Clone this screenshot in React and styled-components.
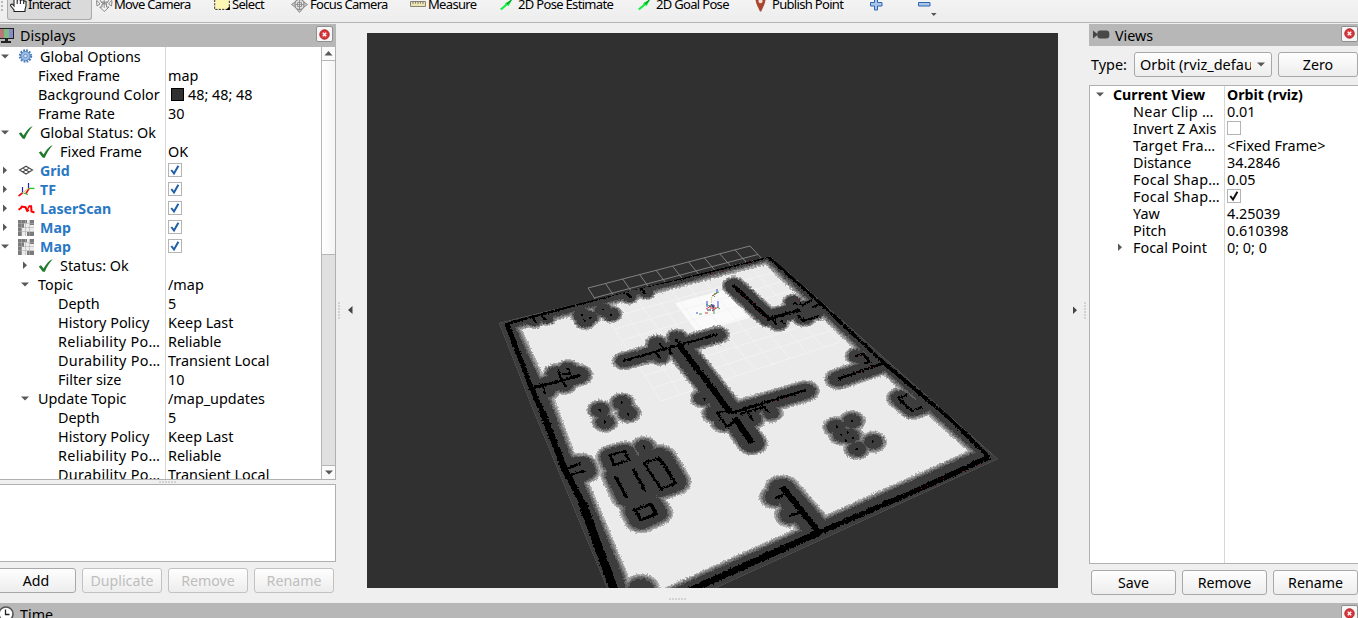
import React from 'react';
import styled, { createGlobalStyle, css } from 'styled-components';

const Global = createGlobalStyle`
  * { box-sizing: border-box; }
  body { margin: 0; background: #efefef; overflow: hidden; }
  svg { display: block; flex: none; }
`;

const Window = styled.div`
  width: 1358px;
  height: 618px;
  overflow: hidden;
  display: flex;
  flex-direction: column;
  background: #efefef;
  color: #000;
  font: 14.5px/19px 'Noto Sans', 'Open Sans', sans-serif;
  white-space: nowrap;
`;

/* ---------- toolbar ---------- */
const Toolbar = styled.div`
  height: 23px;
  flex: none;
  display: flex;
  align-items: flex-start;
  overflow: hidden;
  border-bottom: 1px solid #b4b4b4;
  background: linear-gradient(#f3f3f3, #ededed);
  font-size: 13px;
`;
const Grip = styled.div`
  width: 7px;
  height: 13px;
  flex: none;
  background: radial-gradient(circle at 2px 2px, #b9b9b9 1px, transparent 1.2px) 0 0 / 4px 4px repeat-y;
`;
const ToolButton = styled.div`
  width: ${p => p.$w}px;
  height: 20px;
  flex: none;
  display: flex;
  align-items: flex-start;
  padding-left: ${p => p.$pad || 0}px;
  ${p => p.$active && css`
    background: #dadada;
    border: 1px solid #aaa;
    border-top: 0;
    border-radius: 0 0 3px 3px;
  `}
`;
const ToolIcon = styled.div`
  width: ${p => p.$w || 18}px;
  height: 20px;
  flex: none;
`;
const ToolLabel = styled.span`
  margin-top: -5px;
  letter-spacing: -0.68px;
`;

/* ---------- shared panel parts ---------- */
const Body = styled.div`
  display: flex;
  height: 580px;
  flex: none;
`;
const Side = styled.div`
  width: ${p => p.$w}px;
  flex: none;
  display: flex;
  flex-direction: column;
  padding-top: 1px;
`;
const PanelHeader = styled.div`
  height: ${p => p.$h || 22}px;
  flex: none;
  display: flex;
  align-items: center;
  background: #b7b7b7;
  padding-right: ${p => p.$right || 0}px;
  font-size: 14.3px;
`;
const HeaderIcon = styled.div`
  width: ${p => p.$w}px;
  flex: none;
`;
const HeaderTitle = styled.div`
  flex: 1;
`;
const CloseBox = styled.div`
  width: 17px;
  height: 16px;
  margin-top: ${p => (p.$flush ? 0 : -3)}px;
  border: 1px solid #909090;
  border-radius: 2px;
  background: #f6f6f6;
  display: flex;
  align-items: center;
  justify-content: center;
`;
const Button = styled.div`
  width: ${p => p.$w}px;
  height: 25px;
  flex: none;
  border: 1px solid ${p => (p.$off ? '#c2c2c2' : '#a8a8a8')};
  border-radius: 3px;
  background: linear-gradient(#fefefe, #ededed);
  color: ${p => (p.$off ? '#bebebe' : '#000')};
  display: flex;
  align-items: center;
  justify-content: center;
  font-size: 14.2px;
`;
const ButtonRow = styled.div`
  display: flex;
  gap: 6px;
  margin-top: ${p => p.$top}px;
  margin-left: ${p => p.$left}px;
`;

/* ---------- property trees ---------- */
const TreeBox = styled.div`
  display: flex;
  height: ${p => p.$h}px;
  flex: none;
  overflow: hidden;
  background: #fff;
  border: solid #b0b0b0;
  border-width: ${p => p.$border};
`;
const Rows = styled.div`
  flex: 1;
  min-width: 0;
  background: linear-gradient(#d6d6d6, #d6d6d6) ${p => p.$split}px 0 / 1px 100% no-repeat;
`;
const Row = styled.div`
  display: flex;
  align-items: center;
  height: ${p => p.$h}px;
  line-height: ${p => p.$h}px;
  font-weight: ${p => (p.$bold ? 700 : 400)};
  font-size: ${p => (p.$bold ? 14.2 : 14.4)}px;
`;
const NameCell = styled.div`
  width: ${p => p.$w}px;
  flex: none;
  display: flex;
  align-items: center;
  padding-left: ${p => p.$indent}px;
  color: ${p => (p.$blue ? '#2a78c4' : 'inherit')};
`;
const ArrowSlot = styled.div`
  width: ${p => p.$w}px;
  flex: none;
`;
const IconSlot = styled.div`
  width: 22px;
  height: 18px;
  flex: none;
  display: flex;
  align-items: center;
`;
const NameText = styled.span`
  letter-spacing: ${p => (p.$elided ? 0.3 : 0)}px;
`;
const ValueCell = styled.div`
  display: flex;
  align-items: center;
  padding-left: 3px;
`;
const Swatch = styled.div`
  width: 13px;
  height: 13px;
  margin: 0 4px 0 3px;
  border: 1px solid #000;
  background: #303030;
`;
const CheckBox = styled.div`
  width: 14px;
  height: 14px;
  margin-top: -2px;
  border: 1px solid #b4b4b4;
  background: #fff;
  display: flex;
  align-items: center;
  justify-content: center;
`;
const ScrollBar = styled.div`
  width: 14px;
  flex: none;
  border-left: 1px solid #b6b6b6;
  display: flex;
  flex-direction: column;
  background: #e0e0e0;
`;
const ScrollEnd = styled.div`
  height: 14px;
  flex: none;
  background: #fbfbfb;
  border: solid #b6b6b6;
  border-width: ${p => (p.$bottom ? '1px 0 0' : '0 0 1px')};
  display: flex;
  align-items: center;
  justify-content: center;
`;
const ScrollThumb = styled.div`
  height: 194px;
  background: linear-gradient(90deg, #fff, #f4f4f4);
  border-bottom: 1px solid #b6b6b6;
`;
const ScrollTrack = styled.div`
  flex: 1;
`;
const Dots = styled.div`
  width: ${p => (p.$v ? 3 : 18)}px;
  height: ${p => (p.$v ? 18 : 3)}px;
  background: radial-gradient(circle at 1px 1px, #c4c4c4 0.6px, transparent 0.9px) 0 0 / 3px 3px;
`;
const SplitRow = styled.div`
  height: 4px;
  flex: none;
  display: flex;
  align-items: center;
  justify-content: center;
`;
const HelpBox = styled.div`
  height: 78px;
  flex: none;
  background: #fff;
  border: solid #b0b0b0;
  border-width: 1px 1px 1px 0;
`;
const Gutter = styled.div`
  width: ${p => p.$w}px;
  flex: none;
  display: flex;
  align-items: center;
  justify-content: ${p => (p.$right ? 'flex-end' : 'flex-start')};
  gap: 5px;
  padding: 0 ${p => (p.$right ? 2 : 0)}px 5px ${p => (p.$right ? 0 : 2)}px;
`;
const Center = styled.div`
  width: 691px;
  flex: none;
  padding-top: 10px;
  display: flex;
  flex-direction: column;
`;
const Viewport = styled.div`
  height: 555px;
  background: #303030;
  overflow: hidden;
`;
const CenterFoot = styled.div`
  flex: 1;
  padding: 10px 0 0 302px;
`;
const TypeRow = styled.div`
  display: flex;
  align-items: center;
  height: 39px;
  flex: none;
  padding: 0 0 2px 2px;
`;
const TypeLabel = styled.div`
  width: 43px;
  font-size: 14.4px;
`;
const Select = styled.div`
  width: 138px;
  height: 25px;
  border: 1px solid #a8a8a8;
  border-radius: 3px;
  background: linear-gradient(#fefefe, #ededed);
  display: flex;
  align-items: center;
  justify-content: space-between;
  padding: 0 6px 0 5px;
  margin-right: 6px;
`;
const SelectText = styled.div`
  width: 111px;
  overflow: hidden;
`;
const TimeBar = styled(PanelHeader)`
  height: 22px;
  align-items: flex-start;
  padding-top: 2px;
`;

/* ---------- icons ---------- */
const Tri = ({ dir, c = '#585858' }) => {
  const d = { down: 'M1 2.5H9L5 6.5Z', right: 'M3 0.5V8L7 4.2Z', left: 'M6.5 0V8L2 4Z', up: 'M0.5 6.5H8.5L4.5 2Z' }[dir];
  return <svg width="9" height="9"><path d={d} fill={c} /></svg>;
};
const Tick = () => (
  <svg width="16" height="16" viewBox="0 0 16 16">
    <path d="M0.8 8.6 3 7.2 5.6 10.6C8 6 10.8 2.6 14.8 1 11.4 4.8 8.8 9 6.8 13.8H4.8Z" fill="#1f7a2a" />
  </svg>
);
const Check = ({ c }) => (
  <svg width="12" height="12" viewBox="0 0 12 12">
    <path d="M2.3 6 5 9.5 9.4 1.8" fill="none" stroke={c} strokeWidth="2" />
  </svg>
);
const Gear = () => (
  <svg width="15" height="15" viewBox="0 0 15 15">
    <circle cx="7.5" cy="7" r="5.6" fill="none" stroke="#4679b8" strokeWidth="2.2" strokeDasharray="1.7 1.23" />
    <circle cx="7.5" cy="7" r="4.6" fill="#9dbfe6" stroke="#4c80bd" />
    <circle cx="7.5" cy="7" r="1.8" fill="#dce9f7" stroke="#4c80bd" strokeWidth=".8" />
  </svg>
);
const GridIcon = () => (
  <svg width="16" height="12" viewBox="0 0 16 12">
    <path d="M1.5 5 8 1.2 14.5 5 8 9Z M4.7 3.1 11.3 7 M11.3 3.1 4.7 7" fill="none" stroke="#4a4a4a" strokeWidth="1.1" />
  </svg>
);
const TfIcon = () => (
  <svg width="17" height="16" viewBox="0 0 17 16" fill="none" strokeWidth="1.2">
    <path d="M4.5 5V10.5M10.5 1V6" stroke="#22c" />
    <path d="M5.5 11 10 12.5M11 6.3H16.5" stroke="#1c2" />
    <path d="M4.5 11 0.5 14M11 6.5 8 11.5" stroke="#e11" strokeWidth="1.6" />
    <path d="M5 10.5 10.5 6.5" stroke="#e0c020" strokeWidth=".9" />
  </svg>
);
const LaserIcon = () => (
  <svg width="17" height="12" viewBox="0 0 17 12">
    <path d="M0.5 6.8 3 5 3.8 3.6 7.5 4.2 9.2 8 11 7.2M10.8 3.2H14M13.2 3.5 13.5 8.5 16.5 9.5" fill="none" stroke="#f00" strokeWidth="2" />
    <path d="M9 7.5 11.2 3" stroke="#f00" strokeWidth="1.4" />
  </svg>
);
const MapIcon = () => (
  <svg width="16" height="16" viewBox="0 0 16 16">
    <path d="M0 0H16V16H0Z" fill="#ececec" />
    <path d="M0 0H9V3H6V8H4V16H0Z M12 0H16V5H12Z M9 12H16V16H9Z" fill="#7b7b7b" />
    <path d="M3.5 0V16M7.5 0V16M11.5 0V16M0 3.5H16M0 7.5H16M0 11.5H16" stroke="#b0b0b0" strokeWidth=".6" />
  </svg>
);
const Monitor = () => (
  <svg width="15" height="17" viewBox="0 0 15 17">
    <path d="M-2 1H14V12H-2Z" fill="#222" />
    <path d="M-1 2H4V11H-1Z" fill="#b87878" /><path d="M4 2H9V11H4Z" fill="#7dbb86" /><path d="M9 2H13V11H9Z" fill="#8a88c8" />
    <path d="M5 12H8V14H11V16H1V14H5Z" fill="#222" />
  </svg>
);
const CloseIcon = () => (
  <svg width="11" height="11" viewBox="0 0 11 11">
    <circle cx="5.5" cy="5.5" r="4.7" fill="#d8383c" stroke="#b01c22" />
    <path d="M3.8 3.8 7.2 7.2M7.2 3.8 3.8 7.2" stroke="#fff" strokeWidth="1.4" />
  </svg>
);
const CameraIcon = () => (
  <svg width="22" height="10" viewBox="-4 0 22 10">
    <path d="M0 0.5 5 4.5 0 8.5Z" fill="#444" /><rect x="4.3" y="0.5" width="12" height="8" rx="3" fill="#484848" />
  </svg>
);
const Clock = () => (
  <svg width="16" height="17" viewBox="0 0 16 17">
    <circle cx="6" cy="9" r="7" fill="#fff" stroke="#555" strokeWidth="1.6" />
    <path d="M5.5 4.5V9.5H9.5" fill="none" stroke="#222" strokeWidth="1.3" />
  </svg>
);
const Hand = () => (
  <svg width="17" height="13" viewBox="0 0 17 13">
    <path d="M4 0V6L2.5 4.2C1 3.8 0 5 .8 6L4 10V11.5H15V9.5L16 6V1.5C15 .5 14 1 13.7 2.2V0.5C12.5-.6 11-.3 10.4 1V0C9-.8 7.8-.6 7.2.6V0M7.2 0V4M10.4 0V4M13.7 1V4" fill="#fff" stroke="#222" strokeWidth="1.1" />
  </svg>
);
const MoveIcon = () => (
  <svg width="17" height="12" viewBox="0 0 17 12" fill="#f4f4f4" stroke="#7c7c7c" strokeWidth=".9">
    <path d="M.5 0 4 4 1 6 .5 1M16 0 12.5 4 15.5 6 16 1M4 0 6 3 11 3 13 0M6 4H10.5V7H13L8.2 11.5 3.7 7H6Z" />
    <path d="M8.2 0V8M5 2H12" strokeWidth=".8" />
  </svg>
);
const SelectIcon = () => (
  <svg width="17" height="11"><path d="M.7 -5H15.3V9.4H.7Z" fill="#fdf6b4" stroke="#333" strokeDasharray="2.2 1.2" /><path d="M15.8 6V10H12Z" /></svg>
);
const FocusIcon = () => (
  <svg width="17" height="13" viewBox="0 0 17 13" fill="none" stroke="#8c8c8c">
    <circle cx="8.5" cy="4.5" r="5" fill="#e2e2e2" strokeWidth="1.1" />
    <path d="M.5 4.5 4 2V7ZM16.5 4.5 13 2V7ZM8.5 12.5 6 9.5H11Z" fill="#ccc" />
    <path d="M8.5 0V9M4 4.5H13M6.5 2.5H10.5V6.5H6.5Z" strokeWidth=".9" />
  </svg>
);
const Ruler = () => (
  <svg width="17" height="8"><path d="M.5 1.5H15.5V6.5H.5Z" fill="#eee6b0" stroke="#888470" /><path d="M3 1V4M5.5 1V3.5M8 1V4M10.5 1V3.5M13 1V4" stroke="#777" /></svg>
);
const GreenArrow = () => (
  <svg width="15" height="11"><path d="M.8 9.6 7 4.2" stroke="#0cf03c" strokeWidth="2" /><path d="M5 3.2 12.5-1 8.6 6Z" fill="#0be238" /><path d="M7 4 11.5 0" stroke="#067a20" strokeWidth="1" /></svg>
);
const Pin = () => (
  <svg width="13" height="12" viewBox="0 0 13 12"><path d="M1.5-1H11.5C11.5 3 9.5 6 7.2 11.5H6C3.5 6 1.5 3 1.5-1Z" fill="#a8472e" /><circle cx="6.5" cy="1.2" r="2" fill="#f3ded8" /></svg>
);
const Plus = () => (
  <svg width="13" height="11"><path d="M4.5-2H7.5V2.5H12V6H7.5V10H4.5V6H.5V2.5H4.5Z" fill="#a9c6ea" stroke="#2f66b0" /></svg>
);
const Minus = () => (
  <svg width="13" height="8"><path d="M.5 2.5H12V6H.5Z" fill="#a9c6ea" stroke="#2f66b0" /></svg>
);

/* ---------- 3D scene ---------- */
const SQUASH = 0.78;
const pathOf = (pts, closed) =>
  'M' + pts.map(([x, y]) => `${x} ${(y / SQUASH).toFixed(2)}`).join('L') + (closed ? 'Z' : '');
const dot = (x, y) => [[x, y], [x + 0.1, y]];

// inflated areas: [halo width, points, closed]
const HALOS = [
  [20, [[541, 387], [579, 375]]], [19, dot(568, 370)], [19, dot(556, 374)], [19, dot(564, 384)], [17, dot(547, 391)],
  [15, dot(534, 320)], [13, dot(547, 318)], [15, dot(629, 296)], [14, dot(646, 292)],
  [17, dot(582, 315)], [16, dot(585, 321)], [15, dot(590, 317)], [16, dot(603, 310)], [16, dot(611, 314)],
  [16, [[624, 361], [718, 335]]], [17, dot(657, 344)], [17, dot(677, 338)], [17, dot(660, 356)],
  [24, [[680, 348], [731, 413], [752, 443]]], [18, dot(703, 398)], [21, dot(716, 413)], [20, dot(724, 422)],
  [19, [[731, 413], [806, 391]]], [16, dot(771, 413)], [19, dot(752, 419)],
  [18, [[734, 286], [768, 318], [821, 304]]], [15, dot(793, 302)], [21, dot(804, 316)], [17, dot(815, 312)], [16, dot(778, 323)],
  [19, [[838, 379], [880, 365]]], [17, dot(857, 356)], [17, dot(867, 360)],
  [19, [[900, 398], [913, 409], [921, 406]]],
  [18, dot(600, 410)], [18, dot(622, 403)], [18, dot(628, 413)], [18, dot(605, 422)],
  [18, dot(852, 421)], [18, dot(836, 427)], [18, dot(842, 435)], [18, dot(850, 436)], [18, dot(857, 449)], [18, dot(873, 442)],
  [21, [[611, 457], [625, 453], [627, 460], [614, 464]], true], [18, dot(644, 447)],
  [21, [[616, 475], [640, 467], [648, 489], [627, 498]], true],
  [25, [[645, 463], [660, 458], [674, 482], [660, 487]], true],
  [23, [[636, 510], [650, 504], [656, 513], [641, 520]], true],
  [23, [[566, 466], [582, 466], [584, 471], [572, 476]], true],
  [26, [[782, 489], [820, 533]]], [21, dot(775, 497)], [21, dot(790, 515)], [24, dot(641, 588)],
];

// occupied cells: [line width, points, closed]
const WALLS = [
  [3, [[506, 324], [543, 314], [630, 290], [700, 274], [769, 257]]],
  [3.6, [[769, 257], [821, 304], [884, 363]]], [4.3, [[884, 363], [948, 417], [989, 457]]],
  [5, [[507, 324], [531, 387], [542, 411]]], [6.5, [[542, 411], [565, 470], [582, 502]]], [8.5, [[582, 502], [597, 543], [615, 592]]],
  [6.4, [[989, 457], [920, 489], [818, 533]]], [8, [[818, 533], [740, 568], [680, 595]]],
  [3.5, [[532, 388], [556, 382], [580, 375]]], [2.5, [[558, 370], [561, 379], [566, 387]]], [2.5, [[562, 374], [570, 374], [568, 368]]], [2, [[543, 386], [545, 394]]],
  [2, [[533, 316], [536, 323]]], [2, [[541, 315], [546, 320]]], [3, [[627, 293], [631, 298]]], [3, [[642, 289], [645, 294]]],
  [2.8, [[623, 361], [718, 334]]], [2, [[659, 343], [664, 349]]], [2, [[656, 352], [660, 359]]], [2, [[669, 348], [671, 354]]], [3, [[676, 339], [682, 347]]],
  [6, [[679, 345], [731, 413]]], [6.5, [[735, 418], [752, 443]]],
  [3.3, [[731, 413], [806, 390]]], [2.6, [[717, 413], [727, 427], [735, 421]]], [2.5, [[717, 413], [730, 410]]], [2.6, [[740, 414], [764, 407], [769, 413]]], [2.5, [[748, 413], [753, 421]]],
  [4.2, [[733, 285], [769, 319]]], [4, [[768, 319], [800, 310]]], [2.6, [[793, 303], [803, 305], [812, 300]]], [2.8, [[798, 315], [803, 321], [819, 316]]], [3, [[812, 307], [822, 304]]], [2, [[772, 318], [776, 325]]], [2, [[781, 321], [785, 324]]],
  [3.3, [[838, 379], [884, 363]]], [2.6, [[855, 356], [863, 354], [870, 362], [864, 363]]],
  [2.8, [[907, 395], [898, 398], [912, 411], [922, 407]]],
  [2.6, [[610, 455], [625, 451], [629, 460], [614, 465]], true],
  [3.2, [[615, 476], [627, 498]]], [3.2, [[633, 469], [645, 491]]],
  [2.6, [[644, 463], [660, 458], [676, 483], [661, 489]], true], [3.6, [[659, 458], [675, 482]]],
  [3.5, [[635, 510], [651, 504], [656, 514], [641, 520]], true],
  [3, [[567, 469], [581, 463]]], [3, [[570, 475], [585, 471]]],
  [6.5, [[782, 487], [820, 533]]], [2.8, [[783, 495], [775, 498]]], [2.8, [[789, 516], [799, 513]]],
];
const POINTS = [
  [582, 315], [585, 321], [590, 318], [603, 310], [611, 315], [600, 410], [622, 403], [628, 414], [605, 422], [644, 447],
  [852, 421], [837, 427], [841, 435], [848, 433], [853, 438], [846, 441], [857, 449], [873, 442], [704, 399],
];
const OUTER = [[499, 323], [770, 256], [998, 459], [740, 577], [624, 630], [607, 588], [567, 492], [533, 410]];
const INNER = [[515, 327], [767, 260], [862, 350], [976, 452], [823, 521], [750, 554], [655, 597], [628, 597], [622, 574], [604, 531], [587, 491], [569, 453], [550, 402]];
const LEVELS = [['#b2b2b2', 10], ['#979797', 7.8], ['#7b7b7b', 5.6], ['#5e5e5e', 3.2], ['#3c3c3c', 0]];
// rings around an obstacle get wider toward the viewer
const near = y => 0.7 + Math.max(0, y - 300) / 480;

// perspective projection of the unit square onto the ground grid quad
const QUAD = [[588, 288], [750, 246], [840, 342], [661, 401]];
const project = (u, v) => {
  const [[x0, y0], [x1, y1], [x2, y2], [x3, y3]] = QUAD;
  const dx1 = x1 - x2, dx2 = x3 - x2, dx3 = x0 - x1 + x2 - x3;
  const dy1 = y1 - y2, dy2 = y3 - y2, dy3 = y0 - y1 + y2 - y3;
  const den = dx1 * dy2 - dx2 * dy1;
  const g = (dx3 * dy2 - dx2 * dy3) / den;
  const h = (dx1 * dy3 - dx3 * dy1) / den;
  const w = g * u + h * v + 1;
  return [((x1 - x0 + g * x1) * u + (x3 - x0 + h * x3) * v + x0) / w, ((y1 - y0 + g * y1) * u + (y3 - y0 + h * y3) * v + y0) / w];
};
const gridPath = Array.from({ length: 11 }, (_, i) => {
  const t = i / 10;
  return `M${project(t, 0)}L${project(t, 1)}M${project(0, t)}L${project(1, t)}`;
}).join('');
const plain = pts => 'M' + pts.map(p => p.join(' ')).join('L') + 'Z';

const REDS = [[712, 273], [722, 271], [668, 280], [740, 291], [745, 296], [752, 303], [757, 308], [760, 312], [765, 317], [799, 300], [870, 367], [861, 371], [858, 355], [921, 488], [927, 485], [943, 478], [962, 471], [965, 470], [978, 464], [935, 485], [785, 397], [775, 400], [751, 261]];
const AXES = [
  ['#2a36d8', 'M707 301V307M717 289V293M718 301V308M697 312V314M713 304V311'],
  ['#d3222e', 'M706 309 711 306M712 311 718 307M712 296 717 293M710 308H716M705 313H708'],
  ['#2e9a3c', 'M706 304 709 306M714 294 719 292M714 309V314M717 307 720 309M699 314H702M713 295 715 297'],
  ['#202040', 'M709 306H715M711 304 714 308M707 310H711'],
];

const Scene = () => (
  <svg width="691" height="555" viewBox="367 33 691 555">
    <defs>
      <clipPath id="mapArea"><path d={plain(OUTER)} /></clipPath>
      <filter id="cells" x="480" y="240" width="540" height="400" filterUnits="userSpaceOnUse">
        <feTurbulence type="fractalNoise" baseFrequency="0.6" numOctaves="1" seed="4" result="n" />
        <feDisplacementMap in="SourceGraphic" in2="n" scale="3.6" xChannelSelector="R" yChannelSelector="G" />
      </filter>
    </defs>
    <path d={gridPath} fill="none" stroke="#8a8a8c" strokeWidth=".9" />
    <g clipPath="url(#mapArea)">
      <path d={plain(OUTER)} fill="#ebebeb" />
      <path d="M675 303 724 290 749 318 697 332Z" fill="#fafafa" />
      <path d={gridPath} fill="none" stroke="#f3f3f3" strokeWidth=".9" />
      <g filter="url(#cells)">
        <g transform={`scale(1 ${SQUASH})`} strokeLinecap="round" strokeLinejoin="round">
          {LEVELS.map(([c, extra]) => (
            <g key={c} stroke={c} fill="none" shapeRendering="crispEdges">
              <path d={pathOf([[470, 200], [1040, 200], [1040, 660], [470, 660]], true) + pathOf(INNER, true)} fill={c} fillRule="evenodd" strokeWidth={extra * 1.1 + 0.2} />
              {HALOS.map(([w, pts, closed], i) => (
                <path key={i} d={pathOf(pts, closed)} fill={closed ? c : 'none'} strokeWidth={w + extra * near(pts[0][1])} />
              ))}
            </g>
          ))}
          <g stroke="#040404" fill="none" shapeRendering="crispEdges" strokeLinecap="butt">
            {WALLS.map(([w, pts, closed], i) => <path key={i} d={pathOf(pts, closed)} strokeWidth={w} />)}
            {POINTS.map(([x, y], i) => <rect key={i} x={x - 1} y={y / SQUASH - 1} width="2.2" height="2.4" fill="#040404" stroke="none" />)}
          </g>
        </g>
      </g>
      {REDS.map(([x, y], i) => <rect key={i} x={x} y={y} width="1" height="1" fill="#8c0808" />)}
    </g>
    <g fill="none" strokeWidth="1" opacity=".9">
      {AXES.map(([c, d]) => <path key={c} d={d} stroke={c} />)}
      <path d="M711.5 297V303" stroke="#d8d4a8" strokeWidth="1" />
    </g>
  </svg>
);

/* ---------- data ---------- */
const ROWS = [
  { a: 'down', icon: <Gear />, n: 'Global Options' },
  { x: 38, n: 'Fixed Frame', v: 'map' },
  { x: 38, n: 'Background Color', v: '48; 48; 48', sw: true },
  { x: 38, n: 'Frame Rate', v: '30' },
  { a: 'down', icon: <Tick />, n: 'Global Status: Ok' },
  { x: 38, icon: <Tick />, n: 'Fixed Frame', v: 'OK' },
  { a: 'right', icon: <GridIcon />, n: 'Grid', blue: true, check: true },
  { a: 'right', icon: <TfIcon />, n: 'TF', blue: true, check: true },
  { a: 'right', icon: <LaserIcon />, n: 'LaserScan', blue: true, check: true },
  { a: 'right', icon: <MapIcon />, n: 'Map', blue: true, check: true },
  { a: 'down', icon: <MapIcon />, n: 'Map', blue: true, check: true },
  { x: 20, a: 'right', icon: <Tick />, n: 'Status: Ok' },
  { x: 20, a: 'down', n: 'Topic', v: '/map' },
  { x: 58, n: 'Depth', v: '5' },
  { x: 58, n: 'History Policy', v: 'Keep Last' },
  { x: 58, n: 'Reliability Po…', v: 'Reliable' },
  { x: 58, n: 'Durability Po…', v: 'Transient Local' },
  { x: 58, n: 'Filter size', v: '10' },
  { x: 20, a: 'down', n: 'Update Topic', v: '/map_updates' },
  { x: 58, n: 'Depth', v: '5' },
  { x: 58, n: 'History Policy', v: 'Keep Last' },
  { x: 58, n: 'Reliability Po…', v: 'Reliable' },
  { x: 58, n: 'Durability Po…', v: 'Transient Local' },
];
const VIEW_ROWS = [
  { n: 'Near Clip …', v: '0.01' },
  { n: 'Invert Z Axis', box: true },
  { n: 'Target Fra…', v: '<Fixed Frame>' },
  { n: 'Distance', v: '34.2846' },
  { n: 'Focal Shap…', v: '0.05' },
  { n: 'Focal Shap…', box: true, on: true },
  { n: 'Yaw', v: '4.25039' },
  { n: 'Pitch', v: '0.610398' },
  { n: 'Focal Point', v: '0; 0; 0', a: true },
];
const TOOLS = [
  { w: 85, pad: 2, icon: <Hand />, iw: 18, n: 'Interact', active: true },
  { w: 118, pad: 4, icon: <MoveIcon />, n: 'Move Camera' },
  { w: 77, pad: 4, icon: <SelectIcon />, n: 'Select' },
  { w: 119, pad: 4, icon: <FocusIcon />, iw: 19, n: 'Focus Camera' },
  { w: 90, pad: 4, icon: <Ruler />, n: 'Measure' },
  { w: 138, pad: 4, icon: <GreenArrow />, n: '2D Pose Estimate' },
  { w: 117, pad: 4, icon: <GreenArrow />, n: '2D Goal Pose' },
  { w: 118, pad: 3, icon: <Pin />, n: 'Publish Point' },
  { w: 48, pad: 1, icon: <Plus /> },
  { w: 14, pad: 1, icon: <Minus />, iw: 13 },
];

export default function App() {
  return (
    <Window>
      <Global />
      <Toolbar>
        <Grip />
        {TOOLS.map((t, i) => (
          <ToolButton key={i} $w={t.w} $pad={t.pad} $active={t.active}>
            <ToolIcon $w={t.iw}>{t.icon}</ToolIcon>
            {t.n && <ToolLabel>{t.n}</ToolLabel>}
          </ToolButton>
        ))}
        <ToolButton $w={10}><svg width="6" height="18"><path d="M0 13H5.6L2.8 16Z" fill="#555" /></svg></ToolButton>
      </Toolbar>
      <Body>
        <Side $w={336}>
          <PanelHeader $h={23} $right={3}>
            <HeaderIcon $w={20}><Monitor /></HeaderIcon>
            <HeaderTitle>Displays</HeaderTitle>
            <CloseBox><CloseIcon /></CloseBox>
          </PanelHeader>
          <TreeBox $h={433} $border="0 1px 1px 0">
            <Rows $split={165}>
              {ROWS.map((r, i) => (
                <Row key={i} $h={19} $bold={r.blue}>
                  <NameCell $w={165} $indent={r.x || 0} $blue={r.blue}>
                    {r.a && <ArrowSlot $w={18}><Tri dir={r.a} /></ArrowSlot>}
                    {r.icon && <IconSlot>{r.icon}</IconSlot>}
                    <NameText $elided={r.n.endsWith('…')}>{r.n}</NameText>
                  </NameCell>
                  <ValueCell>
                    {r.sw && <Swatch />}
                    {r.check && <CheckBox><Check c="#1f5fa8" /></CheckBox>}
                    {r.v}
                  </ValueCell>
                </Row>
              ))}
            </Rows>
            <ScrollBar>
              <ScrollEnd><Tri dir="up" /></ScrollEnd>
              <ScrollThumb />
              <ScrollTrack />
              <ScrollEnd $bottom><Tri dir="down" /></ScrollEnd>
            </ScrollBar>
          </TreeBox>
          <SplitRow><Dots /></SplitRow>
          <HelpBox />
          <ButtonRow $top={6} $left={-4}>
            <Button $w={80}>Add</Button>
            <Button $w={80} $off>Duplicate</Button>
            <Button $w={80} $off>Remove</Button>
            <Button $w={80} $off>Rename</Button>
          </ButtonRow>
        </Side>
        <Gutter $w={31}><Dots $v /><Tri dir="left" c="#444" /></Gutter>
        <Center>
          <Viewport><Scene /></Viewport>
          <CenterFoot><Dots /></CenterFoot>
        </Center>
        <Gutter $w={31} $right><Tri dir="right" c="#444" /><Dots $v /></Gutter>
        <Side $w={269}>
          <PanelHeader>
            <HeaderIcon $w={26}><CameraIcon /></HeaderIcon>
            <HeaderTitle>Views</HeaderTitle>
            <CloseBox><CloseIcon /></CloseBox>
          </PanelHeader>
          <TypeRow>
            <TypeLabel>Type:</TypeLabel>
            <Select><SelectText>Orbit (rviz_default)</SelectText><Tri dir="down" /></Select>
            <Button $w={80}>Zero</Button>
          </TypeRow>
          <TreeBox $h={479} $border="1px 0 1px 1px">
            <Rows $split={134}>
              <Row $h={17} $bold>
                <NameCell $w={134} $indent={5}><ArrowSlot $w={18}><Tri dir="down" /></ArrowSlot>Current View</NameCell>
                <ValueCell>Orbit (rviz)</ValueCell>
              </Row>
              {VIEW_ROWS.map((r, i) => (
                <Row key={i} $h={17}>
                  <NameCell $w={134} $indent={r.a ? 25 : 43}>
                    {r.a && <ArrowSlot $w={18}><Tri dir="right" /></ArrowSlot>}
                    <NameText $elided={r.n.endsWith('…')}>{r.n}</NameText>
                  </NameCell>
                  <ValueCell>
                    {r.box && <CheckBox>{r.on && <Check c="#111" />}</CheckBox>}
                    {r.v}
                  </ValueCell>
                </Row>
              ))}
            </Rows>
          </TreeBox>
          <ButtonRow $top={6} $left={2}>
            <Button $w={85}>Save</Button>
            <Button $w={85}>Remove</Button>
            <Button $w={85}>Rename</Button>
          </ButtonRow>
        </Side>
      </Body>
      <TimeBar>
        <HeaderIcon $w={20}><Clock /></HeaderIcon>
        <HeaderTitle>Time</HeaderTitle>
        <CloseBox $flush><CloseIcon /></CloseBox>
      </TimeBar>
    </Window>
  );
}
